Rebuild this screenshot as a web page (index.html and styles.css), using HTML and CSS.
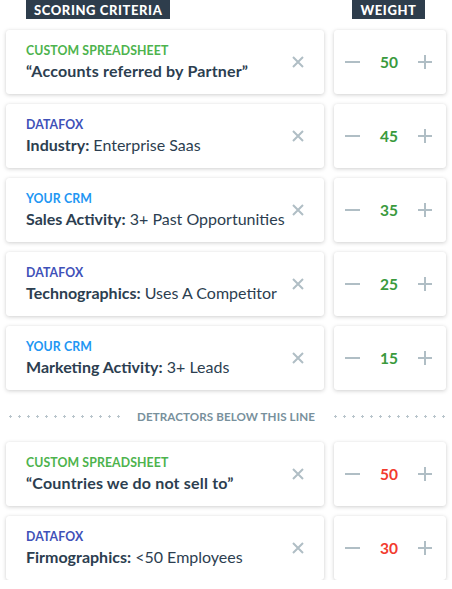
FILE: index.html
```html
<!DOCTYPE html>
<html>
<head>
<meta charset="utf-8">
<link rel="stylesheet" href="styles.css">
</head>
<body>
<div class="board">
  <div class="row head">
    <div class="head-cell"><span class="tag">SCORING CRITERIA</span></div>
    <div class="head-cell center"><span class="tag">WEIGHT</span></div>
  </div>

  <div class="row">
    <div class="card crit">
      <div class="text">
        <div class="src green">CUSTOM SPREADSHEET</div>
        <div class="title quote"><b>“Accounts referred by Partner”</b></div>
      </div>
      <svg class="x" width="12" height="12" viewBox="0 0 12 12"><path d="M1 1L11 11M11 1L1 11"/></svg>
    </div>
    <div class="card weight">
      <svg class="minus" width="15" height="2" viewBox="0 0 15 2"><path d="M0 1H15"/></svg>
      <span class="num pos">50</span>
      <svg class="plus" width="14" height="14" viewBox="0 0 14 14"><path d="M0 7H14M7 0V14"/></svg>
    </div>
  </div>

  <div class="row">
    <div class="card crit">
      <div class="text">
        <div class="src indigo">DATAFOX</div>
        <div class="title"><b>Industry:</b> Enterprise Saas</div>
      </div>
      <svg class="x" width="12" height="12" viewBox="0 0 12 12"><path d="M1 1L11 11M11 1L1 11"/></svg>
    </div>
    <div class="card weight">
      <svg class="minus" width="15" height="2" viewBox="0 0 15 2"><path d="M0 1H15"/></svg>
      <span class="num pos">45</span>
      <svg class="plus" width="14" height="14" viewBox="0 0 14 14"><path d="M0 7H14M7 0V14"/></svg>
    </div>
  </div>

  <div class="row">
    <div class="card crit">
      <div class="text">
        <div class="src blue">YOUR CRM</div>
        <div class="title"><b>Sales Activity:</b> 3+ Past Opportunities</div>
      </div>
      <svg class="x" width="12" height="12" viewBox="0 0 12 12"><path d="M1 1L11 11M11 1L1 11"/></svg>
    </div>
    <div class="card weight">
      <svg class="minus" width="15" height="2" viewBox="0 0 15 2"><path d="M0 1H15"/></svg>
      <span class="num pos">35</span>
      <svg class="plus" width="14" height="14" viewBox="0 0 14 14"><path d="M0 7H14M7 0V14"/></svg>
    </div>
  </div>

  <div class="row">
    <div class="card crit">
      <div class="text">
        <div class="src indigo">DATAFOX</div>
        <div class="title"><b>Technographics:</b> Uses A Competitor</div>
      </div>
      <svg class="x" width="12" height="12" viewBox="0 0 12 12"><path d="M1 1L11 11M11 1L1 11"/></svg>
    </div>
    <div class="card weight">
      <svg class="minus" width="15" height="2" viewBox="0 0 15 2"><path d="M0 1H15"/></svg>
      <span class="num pos">25</span>
      <svg class="plus" width="14" height="14" viewBox="0 0 14 14"><path d="M0 7H14M7 0V14"/></svg>
    </div>
  </div>

  <div class="row">
    <div class="card crit">
      <div class="text">
        <div class="src blue">YOUR CRM</div>
        <div class="title"><b>Marketing Activity:</b> 3+ Leads</div>
      </div>
      <svg class="x" width="12" height="12" viewBox="0 0 12 12"><path d="M1 1L11 11M11 1L1 11"/></svg>
    </div>
    <div class="card weight">
      <svg class="minus" width="15" height="2" viewBox="0 0 15 2"><path d="M0 1H15"/></svg>
      <span class="num pos">15</span>
      <svg class="plus" width="14" height="14" viewBox="0 0 14 14"><path d="M0 7H14M7 0V14"/></svg>
    </div>
  </div>

  <div class="divider">
    <span class="dots left"></span>
    <span class="divider-text">DETRACTORS BELOW THIS LINE</span>
    <span class="dots right"></span>
  </div>

  <div class="row">
    <div class="card crit">
      <div class="text">
        <div class="src green">CUSTOM SPREADSHEET</div>
        <div class="title quote"><b>“Countries we do not sell to”</b></div>
      </div>
      <svg class="x" width="12" height="12" viewBox="0 0 12 12"><path d="M1 1L11 11M11 1L1 11"/></svg>
    </div>
    <div class="card weight">
      <svg class="minus" width="15" height="2" viewBox="0 0 15 2"><path d="M0 1H15"/></svg>
      <span class="num neg">50</span>
      <svg class="plus" width="14" height="14" viewBox="0 0 14 14"><path d="M0 7H14M7 0V14"/></svg>
    </div>
  </div>

  <div class="row">
    <div class="card crit">
      <div class="text">
        <div class="src indigo">DATAFOX</div>
        <div class="title"><b>Firmographics:</b> &lt;50 Employees</div>
      </div>
      <svg class="x" width="12" height="12" viewBox="0 0 12 12"><path d="M1 1L11 11M11 1L1 11"/></svg>
    </div>
    <div class="card weight">
      <svg class="minus" width="15" height="2" viewBox="0 0 15 2"><path d="M0 1H15"/></svg>
      <span class="num neg">30</span>
      <svg class="plus" width="14" height="14" viewBox="0 0 14 14"><path d="M0 7H14M7 0V14"/></svg>
    </div>
  </div>
</div>
</body>
</html>
```
FILE: styles.css
```css
* { box-sizing: border-box; }
html, body { margin: 0; padding: 0; background: #fff; }
body {
  font-family: Lato, "Open Sans", "Liberation Sans", sans-serif;
  color: #2c3e50;
}
.board {
  width: 452px;
  padding: 0 6px;
  display: flex;
  flex-direction: column;
  gap: 10px;
}
.row {
  display: grid;
  grid-template-columns: 318px 112px;
  column-gap: 10px;
}
.head { margin-bottom: 1px; }
.head-cell { padding-left: 20px; display: flex; }
.head-cell.center { padding-left: 0; justify-content: center; margin-left: -3px; }
.tag {
  display: inline-block;
  height: 19px;
  line-height: 20px;
  background: #2e3d4c;
  color: #fff;
  font-weight: 900;
  font-size: 13px;
  letter-spacing: 0.6px;
  padding: 0 8px;
}
.card {
  height: 64px;
  background: #fff;
  border-radius: 3px;
  box-shadow: 0 1px 4px rgba(0, 0, 0, 0.18), 0 0 1px rgba(0, 0, 0, 0.08);
  display: flex;
  align-items: center;
}
.crit { padding: 0 20px 0 20px; justify-content: space-between; }
.text { display: flex; flex-direction: column; gap: 2px; }
.src {
  font-size: 12.3px;
  line-height: 16px;
  font-weight: 700;
  letter-spacing: 0.1px;
}
.green { color: #4db34d; }
.indigo { color: #4051b8; }
.blue { color: #2196f3; }
.title {
  font-size: 16px;
  line-height: 20px;
  color: #2c3e50;
}
.title.quote { letter-spacing: 0.18px; }
.title b { font-weight: 700; }
.x { stroke: #b0bec5; stroke-width: 2; fill: none; flex-shrink: 0; }
.weight { justify-content: space-between; padding: 0 14px 0 11px; }
.minus, .plus { stroke: #b0bec5; stroke-width: 2; fill: none; }
.num { font-size: 15.5px; font-weight: 700; }
.pos { color: #3a9a3d; }
.neg { color: #f23b2e; }
.divider {
  height: 32px;
  display: flex;
  align-items: center;
}
.dots {
  height: 3px;
  background-image: radial-gradient(circle at 1.5px 1.5px, #b8c4cb 1px, transparent 1.4px);
  background-size: 9px 3px;
  background-repeat: repeat-x;
}
.dots.left { width: 112px; margin-left: 3px; }
.dots.right { width: 112px; margin-left: auto; }
.divider-text {
  margin-left: 16px;
  font-size: 11.6px;
  font-weight: 700;
  color: #78909c;
  letter-spacing: 0.1px;
}
```
